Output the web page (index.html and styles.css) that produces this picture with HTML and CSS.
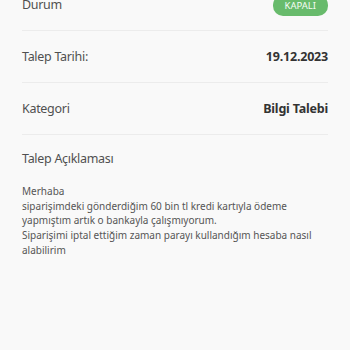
FILE: index.html
```html
<!DOCTYPE html>
<html lang="tr">
<head>
<meta charset="utf-8">
<link rel="stylesheet" href="styles.css">
</head>
<body>
<div class="detail">
  <div class="row">
    <span class="label">Durum</span>
    <span class="badge">KAPALI</span>
  </div>
  <div class="row">
    <span class="label">Talep Tarihi:</span>
    <span class="value">19.12.2023</span>
  </div>
  <div class="row">
    <span class="label">Kategori</span>
    <span class="value">Bilgi Talebi</span>
  </div>
  <div class="desc-block">
    <div class="label desc-title">Talep Açıklaması</div>
    <p class="desc">Merhaba<br>siparişimdeki gönderdiğim 60 bin tl kredi kartıyla ödeme yapmıştım artık o bankayla çalışmıyorum.<br>Siparişimi iptal ettiğim zaman parayı kullandığım hesaba nasıl alabilirim</p>
  </div>
</div>
</body>
</html>
```

FILE: styles.css
```css
html, body {
  margin: 0;
  padding: 0;
  background: #f9f9f9;
  height: 100%;
}
body {
  font-family: "Noto Sans", "DejaVu Sans", sans-serif;
  color: #444;
}
.detail {
  margin-top: -21px;
  padding: 0 22px;
}
.row {
  display: flex;
  justify-content: space-between;
  align-items: center;
  height: 51px;
  border-bottom: 1px solid #ececec;
}
.label {
  font-size: 12.5px;
  letter-spacing: -0.3px;
  color: #505050;
}
.value {
  font-size: 12.5px;
  font-weight: 700;
  letter-spacing: -0.2px;
  color: #333;
}
.badge {
  background: #68bb6c;
  color: #f4fbf4;
  font-size: 9.5px;
  border-radius: 10px;
  padding: 5px 12px 4px;
  line-height: 12px;
  margin-top: 2px;
}
.desc-block {
  padding-top: 15px;
}
.desc-title {
  line-height: 18px;
}
.desc {
  margin: 16px 0 0;
  font-size: 10px;
  line-height: 14.7px;
  color: #555;
  max-width: 300px;
}
```
